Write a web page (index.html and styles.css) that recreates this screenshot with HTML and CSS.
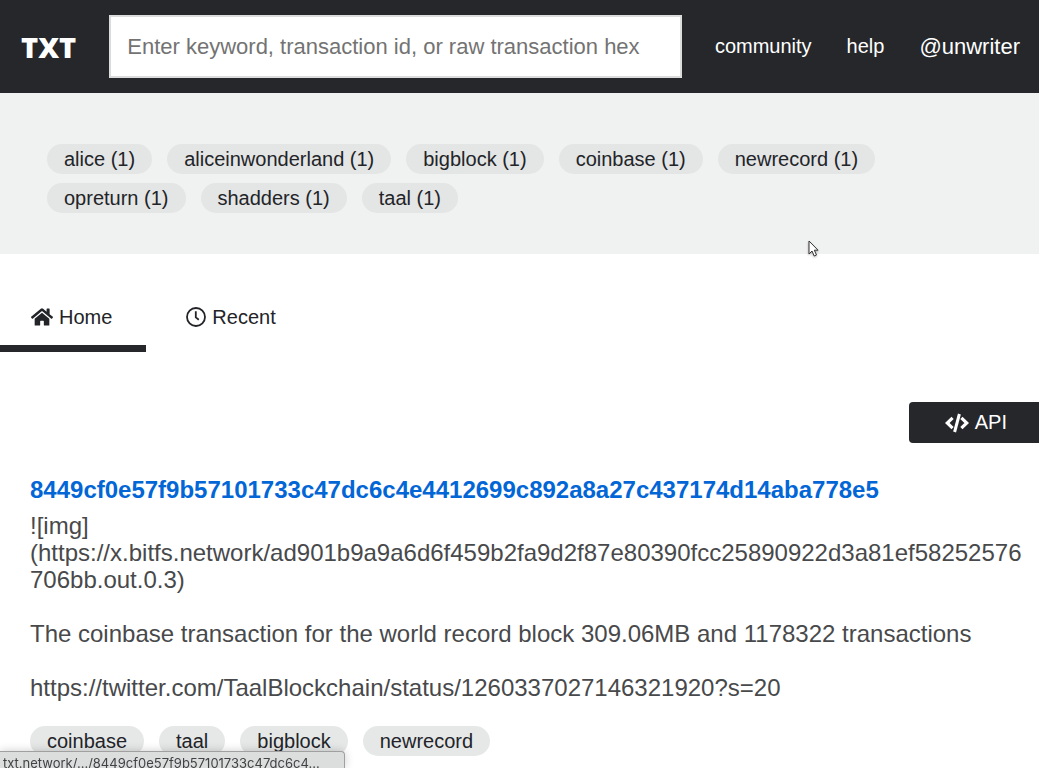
FILE: index.html
```html
<!DOCTYPE html>
<html lang="en">
<head>
<meta charset="utf-8">
<meta name="viewport" content="width=device-width, initial-scale=1">
<title>TXT</title>
<link rel="stylesheet" href="styles.css">
</head>
<body>
<header class="topbar">
  <a class="logo" href="#">TXT</a>
  <input class="search" type="text" aria-label="Search" placeholder="Enter keyword, transaction id, or raw transaction hex">
  <nav class="links">
    <a href="#">community</a>
    <a href="#">help</a>
    <a class="author" href="#">@unwriter</a>
  </nav>
</header>
<section class="cloud">
  <a class="tag" href="#">alice (1)</a>
  <a class="tag" href="#">aliceinwonderland (1)</a>
  <a class="tag" href="#">bigblock (1)</a>
  <a class="tag" href="#">coinbase (1)</a>
  <a class="tag" href="#">newrecord (1)</a>
  <a class="tag" href="#">opreturn (1)</a>
  <a class="tag" href="#">shadders (1)</a>
  <a class="tag" href="#">taal (1)</a>
</section>
<nav class="tabs">
  <a class="tab active" href="#">
    <svg class="icon-home" viewBox="0 0 576 512" aria-hidden="true"><path fill="currentColor" d="M280 148 96 300v164a16 16 0 0 0 16 16h112a16 16 0 0 0 16-16v-96a16 16 0 0 1 16-16h64a16 16 0 0 1 16 16v96a16 16 0 0 0 16 16h112a16 16 0 0 0 16-16V300L296 148a12 12 0 0 0-16 0zM572 251l-84-69V44a12 12 0 0 0-12-12h-56a12 12 0 0 0-12 12v72l-90-74a48 48 0 0 0-61 0L4 251a12 12 0 0 0-2 17l26 31a12 12 0 0 0 17 2L280 107a12 12 0 0 1 16 0l235 194a12 12 0 0 0 17-2l26-31a12 12 0 0 0-2-17z"/></svg>
    <span>Home</span>
  </a>
  <a class="tab" href="#">
    <svg class="icon-clock" viewBox="0 0 20 20" fill="none" stroke="currentColor" aria-hidden="true"><circle cx="10" cy="10" r="9" stroke-width="1.800"/><path d="M9.800 4.200v6.200l3 2.300" stroke-width="1.800"/></svg>
    <span>Recent</span>
  </a>
</nav>
<div class="actions">
  <button class="api" type="button">
    <svg class="icon-code" viewBox="0 0 24 20" fill="none" stroke="currentColor" aria-hidden="true"><path d="M7.600 4.800 2.200 10l5.400 5.200M16.400 4.800 21.800 10l-5.400 5.200" stroke-width="3.200"/><path d="M14.400 1 9.600 19" stroke-width="3"/></svg>
    <span>API</span>
  </button>
</div>
<main class="post">
  <h2 class="txid"><a href="#">8449cf0e57f9b57101733c47dc6c4e4412699c892a8a27c437174d14aba778e5</a></h2>
  <p>![img]<br>(https://x.bitfs.network/ad901b9a9a6d6f459b2fa9d2f87e80390fcc25890922d3a81ef58252576706bb.out.0.3)</p>
  <p>The coinbase transaction for the world record block 309.06MB and 1178322 transactions</p>
  <p>https://twitter.com/TaalBlockchain/status/1260337027146321920?s=20</p>
  <div class="post-tags">
    <a class="tag" href="#">coinbase</a>
    <a class="tag" href="#">taal</a>
    <a class="tag" href="#">bigblock</a>
    <a class="tag" href="#">newrecord</a>
  </div>
</main>
<div class="status">txt.network/.../8449cf0e57f9b57101733c47dc6c4...</div>
<svg class="pointer" viewBox="0 0 12 18" aria-hidden="true"><path d="M1 1v13l3-3 2.200 5 2.300-1-2.200-4.800H10z" fill="#fff" stroke="#333" stroke-width="1"/></svg>
</body>
</html>
```
FILE: styles.css
```css
* { box-sizing: border-box; }

body {
  margin: 0;
  height: 100vh;
  overflow: hidden;
  background: #fff;
  color: #222428;
  font-family: "Liberation Sans", Arial, sans-serif;
  font-size: 20px;
}

a { color: inherit; text-decoration: none; }

.topbar {
  display: flex;
  align-items: center;
  padding: 15px 19px 15px 21px;
  background: #25272b;
  color: #fff;
}

.logo {
  margin-right: 33px;
  font: 800 29px/40px "Open Sans", sans-serif;
}

.search {
  flex: 1;
  min-width: 0;
  height: 63px;
  padding: 0 16px;
  border: 2px solid #dcdcdc;
  border-radius: 0;
  background: #fff;
  font: 22px "Liberation Sans", Arial, sans-serif;
}

.search::placeholder { color: #737373; opacity: 1; }

.links {
  display: flex;
  align-items: center;
  gap: 35px;
  margin-left: 33px;
}

.author { font-size: 22px; }

.cloud {
  display: flex;
  flex-wrap: wrap;
  gap: 9px 15px;
  padding: 51px 47px 41px;
  background: #f0f1f1;
}

.tag {
  padding: 0 17px;
  border-radius: 15px;
  background: #e4e5e5;
  line-height: 30px;
}

.tabs {
  display: flex;
  gap: 9px;
  padding-top: 35px;
}

.tab {
  display: flex;
  align-items: center;
  gap: 6px;
  height: 63px;
  padding: 0 34px 0 31px;
  border-bottom: 7px solid transparent;
}

.active { border-bottom-color: #25272b; }

.icon-home { width: 22px; height: 20px; }
.icon-clock { width: 20px; height: 20px; }

.actions {
  display: flex;
  justify-content: flex-end;
  margin-top: 50px;
}

.api {
  display: flex;
  align-items: center;
  gap: 6px;
  height: 41px;
  padding: 0 32px 0 36px;
  border: 0;
  border-radius: 4px 0 0 4px;
  background: #25272b;
  color: #fff;
  font: 20px "Liberation Sans", Arial, sans-serif;
}

.icon-code { width: 24px; height: 20px; }

.post {
  padding: 32px 14px 32px 30px;
  color: #48494b;
  font-size: 24px;
  line-height: 27px;
}

.txid {
  margin: 0 0 7px;
  color: #0366d6;
  font-size: 24px;
  line-height: 30px;
}

.post p {
  margin: 0 0 27px;
  overflow-wrap: anywhere;
}

.post-tags {
  display: flex;
  gap: 15px;
  margin-top: -2px;
  color: #222428;
  font-size: 20px;
}

.post-tags .tag { background: #e6e8e8; }

.status {
  position: fixed;
  bottom: 0;
  left: 0;
  width: 345px;
  height: 17px;
  padding-left: 3px;
  overflow: hidden;
  border: 1px solid #a0a0a0;
  border-width: 1px 1px 0 0;
  border-radius: 0 4px 0 0;
  background: #dcdddd;
  box-shadow: 0 0 10px rgba(0, 0, 0, 0.2);
  color: #404244;
  font: 13px/22px Inter, sans-serif;
  white-space: nowrap;
}

.pointer {
  position: absolute;
  top: 240px;
  left: 808px;
  width: 12px;
  height: 18px;
  filter: drop-shadow(0 1px 1px rgba(0, 0, 0, 0.3));
}
```
